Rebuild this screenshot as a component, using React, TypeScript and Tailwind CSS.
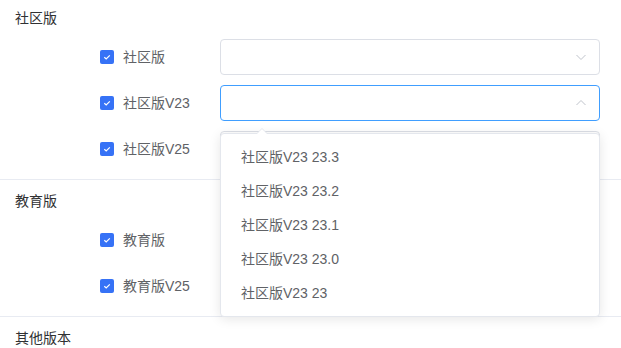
import React from "react";

interface VersionRow {
  label: string;
  open?: boolean;
}

interface Section {
  title: string;
  rows: VersionRow[];
}

const sections: Section[] = [
  {
    title: "社区版",
    rows: [{ label: "社区版" }, { label: "社区版V23", open: true }, { label: "社区版V25" }],
  },
  {
    title: "教育版",
    rows: [{ label: "教育版" }, { label: "教育版V25" }],
  },
  { title: "其他版本", rows: [] },
];

const options = ["社区版V23 23.3", "社区版V23 23.2", "社区版V23 23.1", "社区版V23 23.0", "社区版V23 23"];

const Chevron: React.FC<{ up?: boolean }> = ({ up }) => (
  <svg width="12" height="12" viewBox="0 0 12 12" className="text-[#c0c4cc]">
    <path
      d={up ? "M1.5 8 L6 3.5 L10.5 8" : "M1.5 4 L6 8.5 L10.5 4"}
      fill="none"
      stroke="currentColor"
      strokeWidth="1"
    />
  </svg>
);

const CheckBox: React.FC = () => (
  <span className="flex h-[14px] w-[14px] items-center justify-center rounded-[2px] bg-[#3672f6]">
    <svg width="10" height="10" viewBox="0 0 10 10">
      <path d="M2.3 5.2 L4.2 7 L7.8 3.3" fill="none" stroke="#fff" strokeWidth="1.2" />
    </svg>
  </span>
);

const Dropdown: React.FC = () => (
  <div className="absolute left-0 right-0 top-full z-10 mt-[12px] rounded-[4px] border border-[#e4e7ed] bg-white py-[6px] shadow-[0_2px_12px_0_rgba(0,0,0,0.1)]">
    {/* popper arrow */}
    <span className="absolute -top-[6px] left-[35px] h-0 w-0 border-x-[6px] border-b-[6px] border-x-transparent border-b-[#e4e7ed]" />
    <span className="absolute -top-[5px] left-[35px] h-0 w-0 border-x-[6px] border-b-[6px] border-x-transparent border-b-white" />
    {options.map((opt) => (
      <div key={opt} className="flex h-[34px] items-center px-5 text-[14px] text-[#606266]">
        {opt}
      </div>
    ))}
  </div>
);

const Row: React.FC<{ row: VersionRow }> = ({ row }) => (
  <div className="flex h-[36px] items-center pl-[100px] pr-[21px]">
    <div className="flex w-[120px] items-center gap-[9px]">
      <CheckBox />
      <span className="text-[14px] text-[#606266]">{row.label}</span>
    </div>
    <div className="relative flex-1">
      <div
        className={`flex h-[36px] items-center justify-end rounded-[4px] border bg-white pr-[12px] ${
          row.open ? "border-[#409eff]" : "border-[#dcdfe6]"
        }`}
      >
        <Chevron up={row.open} />
      </div>
      {row.open && <Dropdown />}
    </div>
  </div>
);

export default function App() {
  return (
    <div
      className="-mt-[3px] w-[621px] overflow-hidden bg-white"
      style={{ fontFamily: '"Liberation Sans", "Noto Sans CJK SC", sans-serif' }}
    >
      {sections.map((s, i) => (
        <div key={s.title} className={i < sections.length - 1 ? "border-b border-[#e8ebf2] pb-[12px]" : ""}>
          <div className="flex h-[42px] items-center px-[15px] text-[14px] text-[#303133]">{s.title}</div>
          <div className="flex flex-col gap-[10px]">
            {s.rows.map((r) => (
              <Row key={r.label} row={r} />
            ))}
          </div>
        </div>
      ))}
    </div>
  );
}
